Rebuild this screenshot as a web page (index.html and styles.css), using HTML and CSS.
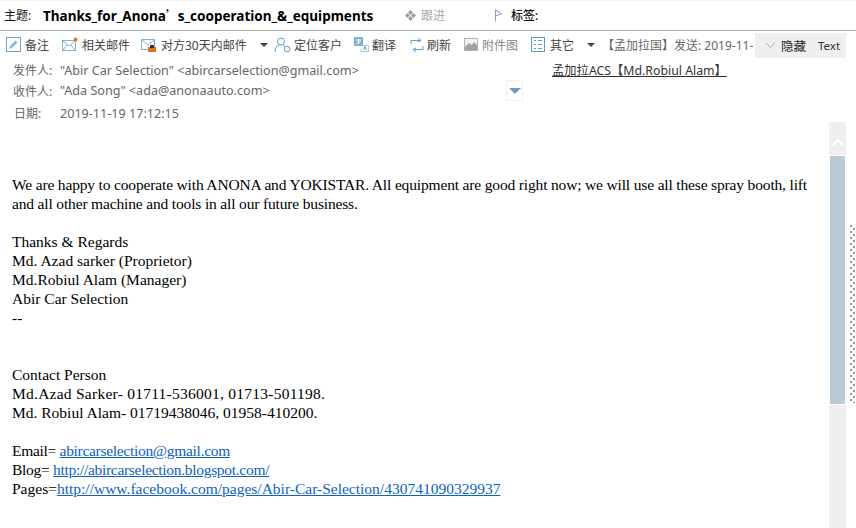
FILE: index.html
```html
<!DOCTYPE html>
<html lang="zh-CN">
<head>
    <meta charset="UTF-8">
    <title>Thanks_for_Anona's_cooperation</title>
    <link rel="stylesheet" href="styles.css">
</head>
<body>
    <div class="subject-bar">
        <span class="subject-label">主题:</span>
        <span class="subject-text">Thanks_for_Anona<span class="wide-quote">’</span>s_cooperation_&amp;_equipments</span>
        <span class="follow">
            <svg class="follow-icon" width="11" height="11" viewBox="0 0 11 11"><path d="M5.500 0l2.400 2.500-2.400 2.400L3.100 2.500zM2.500 3.100l2.400 2.400-2.400 2.400L0 5.500zM8.500 3.100L11 5.500 8.500 7.900 6.100 5.500zM5.500 6.100l2.400 2.400L5.500 11 3.100 8.500z" fill="#9a9a9a"/></svg>
            跟进
        </span>
        <span class="tag">
            <svg width="9" height="13" viewBox="0 0 9 13"><path d="M1.500 0.500v12M1.500 1l6 4-6 2" fill="none" stroke="#7fa3bd"/></svg>
            <span class="tag-label">标签:</span>
        </span>
    </div>

    <div class="toolbar">
        <span class="tool tool-note">
            <svg width="15" height="15" viewBox="0 0 15 15"><rect x="0.500" y="0.500" width="14" height="14" fill="#fff" stroke="#6aa5cf"/><path d="M3 12l1-3 5.500-5.500 2 2L6 11z" fill="#8db9da"/></svg>
            备注
        </span>
        <span class="tool tool-related">
            <svg width="16" height="15" viewBox="0 0 16 15"><rect x="0.500" y="3.500" width="13" height="10" fill="#fff" stroke="#7fb2d3"/><path d="M1 4l6 5 6-5M1 13l4-5M13 13l-4-5" fill="none" stroke="#7fb2d3"/><circle cx="13.500" cy="2.500" r="2" fill="#ec7a1c"/></svg>
            相关邮件
        </span>
        <span class="tool tool-month">
            <svg width="16" height="15" viewBox="0 0 16 15"><rect x="0.500" y="2.500" width="13" height="10" fill="#fff" stroke="#7fb2d3"/><path d="M1 3l6 5 6-5" fill="none" stroke="#7fb2d3"/><rect x="7" y="10" width="8" height="5" fill="#e8700f"/><rect x="9" y="8" width="4" height="3" fill="#333"/></svg>
            对方30天内邮件
        </span>
        <span class="caret caret-month"></span>
        <span class="tool tool-locate">
            <svg width="17" height="16" viewBox="0 0 17 16"><circle cx="7" cy="4.500" r="3.500" fill="none" stroke="#5a9fcc"/><path d="M1 15c0-4 2-6 4-7M9 8c1 .5 1.500 1 2 1.500" fill="none" stroke="#5a9fcc"/><circle cx="13" cy="12" r="2.800" fill="none" stroke="#5a9fcc"/></svg>
            定位客户
        </span>
        <span class="tool tool-translate">
            <svg width="15" height="15" viewBox="0 0 15 15"><rect width="9" height="9" fill="#7fb2d3"/><path d="M2 3h5M4.500 2v5M2.500 7l4-3" fill="none" stroke="#fff"/><path d="M9 8.500h5.500v6H7v-3" fill="none" stroke="#a9c9df"/><path d="M9.500 13l1.500-3.500 1.500 3.500" fill="none" stroke="#5a9fcc"/></svg>
            翻译
        </span>
        <span class="tool tool-refresh">
            <svg width="14" height="16" viewBox="0 0 14 16"><path d="M1 7V3.500h9M8 1l3 2.500L8 5M13 9v3.500H4M6 15l-3-2.500L6 11" fill="none" stroke="#5a9fcc"/></svg>
            刷新
        </span>
        <span class="tool tool-attach">
            <svg width="14" height="13" viewBox="0 0 14 13"><rect width="14" height="13" fill="#b4b4b4"/><rect x="1" y="1" width="12" height="7" fill="#f2f2f2"/><path d="M1 9l4-4 3 2 2-3 3 3v5H1z" fill="#a2a2a2"/></svg>
            附件图
        </span>
        <span class="tool tool-other">
            <svg width="14" height="15" viewBox="0 0 14 15"><rect x="0.500" y="0.500" width="13" height="14" fill="#fff" stroke="#5a9fcc"/><path d="M3 3.500h2M7 3.500h4M3 7.500h2M7 7.500h4M3 11.500h2M7 11.500h4" stroke="#5a9fcc"/></svg>
            其它
        </span>
        <span class="caret caret-other"></span>
        <span class="tool-title">【孟加拉国】发送: 2019-11-</span>
        <div class="hide-panel">
            <svg width="11" height="7" viewBox="0 0 11 7"><path d="M1 1l4.500 4.500L10 1" fill="none" stroke="#9db4c6"/></svg>
            <span class="hide-label">隐藏</span>
            <span class="hide-text">Text</span>
        </div>
    </div>

    <div class="meta">
        <div class="meta-row meta-from">
            <span class="meta-label">发件人:</span>
            <span class="meta-value from-value">"Abir Car Selection" &lt;abircarselection@gmail.com&gt;</span>
            <span class="company">孟加拉ACS【Md.Robiul Alam】</span>
        </div>
        <div class="meta-row meta-to">
            <span class="meta-label">收件人:</span>
            <span class="meta-value to-value">"Ada Song" &lt;ada@anonaauto.com&gt;</span>
            <span class="expand"><span class="expand-arrow"></span></span>
        </div>
        <div class="meta-row meta-date">
            <span class="meta-label date-label">日期:</span>
            <span class="meta-value date-value">2019-11-19 17:12:15</span>
        </div>
    </div>

    <div class="content">
        <div class="message">
            <p class="lead">We are happy to cooperate with ANONA and YOKISTAR. All equipment are good right now; we will use all these spray booth, lift and all other machine and tools in all our future business.</p>
            <p>Thanks &amp; Regards<br>
            Md. Azad sarker (Proprietor)<br>
            Md.Robiul Alam (Manager)<br>
            Abir Car Selection<br>
            --</p>
            <p class="contact">Contact Person<br>
            <span class="loose">Md.Azad Sarker- 01711-536001, 01713-501198.</span><br>
            Md. Robiul Alam- 01719438046, 01958-410200.</p>
            <p><span class="tight">Email= <a href="#">abircarselection@gmail.com</a></span><br>
            <span class="tight">Blog= <a href="#">http://abircarselection.blogspot.com/</a></span><br>
            Pages=<a href="#">http://www.facebook.com/pages/Abir-Car-Selection/430741090329937</a></p>
        </div>
        <div class="scrollbar">
            <div class="scroll-up">
                <svg width="12" height="8" viewBox="0 0 12 8"><path d="M1 7l5-5 5 5" fill="none" stroke="#fff" stroke-width="2.500"/></svg>
            </div>
            <div class="scroll-thumb"></div>
            <div class="scroll-track"></div>
        </div>
        <div class="splitter"><div class="grip"></div></div>
    </div>
</body>
</html>
```

FILE: styles.css
```css
html, body {
    margin: 0;
    padding: 0;
    height: 528px;
    overflow: hidden;
}

body {
    display: flex;
    flex-direction: column;
    background-color: #fff;
    font-family: "Noto Sans", "Noto Sans CJK SC", sans-serif;
    font-size: 12px;
    color: #555;
}

.subject-bar {
    display: flex;
    align-items: center;
    box-sizing: border-box;
    height: 31px;
    padding: 0 0 1px 4px;
    border-top: 1px solid #f0f0f0;
    border-bottom: 1px solid #a8a8a8;
    color: #111;
}

.subject-label {
    width: 39px;
}

.subject-text {
    width: 362px;
    font-size: 13.500px;
    font-weight: bold;
    white-space: nowrap;
    color: #000;
}

.wide-quote {
    display: inline-block;
    width: 12px;
    font-family: "Noto Sans CJK SC", sans-serif;
    font-weight: normal;
}

.follow {
    display: flex;
    align-items: center;
    gap: 5px;
    width: 89px;
    color: #aaa;
}

.tag {
    display: flex;
    align-items: center;
    gap: 8px;
}

.tag-label {
    font-weight: 500;
    color: #111;
}

.toolbar {
    position: relative;
    display: flex;
    align-items: center;
    height: 27px;
    padding-left: 6px;
    white-space: nowrap;
}

.tool {
    display: flex;
    align-items: center;
    gap: 4px;
    color: #444;
}

.tool-note { width: 56px; }
.tool-related { width: 79px; }
.tool-month { width: 119px; }
.tool-locate { width: 80px; gap: 3px; }
.tool-translate { width: 56px; gap: 3px; }
.tool-refresh { width: 54px; gap: 3px; }
.tool-attach { width: 67px; gap: 4px; color: #888; }
.tool-other { width: 56px; gap: 5px; }

.caret {
    width: 0;
    height: 0;
    border-left: 4px solid transparent;
    border-right: 4px solid transparent;
    border-top: 4px solid #444;
}

.caret-month {
    margin-right: 6px;
}

.caret-other {
    margin-right: 7px;
}

.tool-title {
    color: #666;
}

/* sits over the right end of the toolbar */
.hide-panel {
    position: absolute;
    top: 2px;
    right: 10px;
    display: flex;
    align-items: center;
    box-sizing: border-box;
    width: 91px;
    height: 25px;
    padding-left: 10px;
    background-color: #efefef;
}

.hide-label {
    margin-left: 5px;
    font-size: 12.500px;
    color: #222;
}

.hide-text {
    margin-left: 12px;
    font-size: 11.500px;
    color: #333;
}

.meta {
    height: 64px;
}

.meta-row {
    display: flex;
    align-items: center;
    color: #666;
}

.meta-from {
    height: 24px;
    padding-left: 13px;
}

.meta-to {
    height: 17px;
    padding-left: 13px;
}

.meta-date {
    box-sizing: border-box;
    height: 23px;
    padding: 5px 0 0 14px;
}

.meta-label {
    width: 47px;
}

.date-label {
    width: 46px;
}

.meta-value {
    font-size: 12.600px;
}

.from-value {
    width: 492px;
}

.to-value {
    width: 446px;
}

.company {
    font-size: 12.300px;
    color: #333;
    text-decoration: underline;
    white-space: nowrap;
}

.expand {
    display: flex;
    align-items: center;
    justify-content: center;
    flex-shrink: 0;
    box-sizing: border-box;
    width: 17px;
    height: 21px;
    border: 1px solid #eef1f4;
}

.expand-arrow {
    width: 0;
    height: 0;
    border-left: 6px solid transparent;
    border-right: 6px solid transparent;
    border-top: 6px solid #6e9db9;
}

.content {
    flex: 1;
    display: flex;
    min-height: 0;
}

.message {
    width: 805px;
    padding: 53px 12px 0;
    font-family: "Liberation Serif", serif;
    font-size: 15.500px;
    line-height: 19px;
    color: #000;
}

.message p {
    margin: 0 0 19px;
}

.message .lead {
    letter-spacing: -0.16px;
}

.message .contact {
    margin-top: 38px;
}

.message a {
    color: #0b63c5;
}

.loose {
    letter-spacing: 0.25px;
}

.tight {
    letter-spacing: -0.3px;
}

.scrollbar {
    display: flex;
    flex-direction: column;
    align-items: center;
    width: 17px;
}

.scroll-up {
    display: flex;
    justify-content: center;
    box-sizing: border-box;
    width: 17px;
    height: 33px;
    padding-top: 16px;
    background-color: #efefef;
}

.scroll-thumb {
    width: 15px;
    height: 248px;
    margin: 1px 0;
    background-color: #b8cad6;
}

.scroll-track {
    flex: 1;
    width: 17px;
    background-color: #efefef;
}

.splitter {
    flex: 1;
    padding: 103px 0 0 4px;
}

.grip {
    width: 5px;
    height: 178px;
    background-image:
        repeating-linear-gradient(#999 0 2px, transparent 2px 6px),
        repeating-linear-gradient(#999 0 2px, transparent 2px 6px);
    background-size: 2px 6px, 2px 6px;
    background-repeat: repeat-y, repeat-y;
    background-position: 0 0, 3px 3px;
}
```
